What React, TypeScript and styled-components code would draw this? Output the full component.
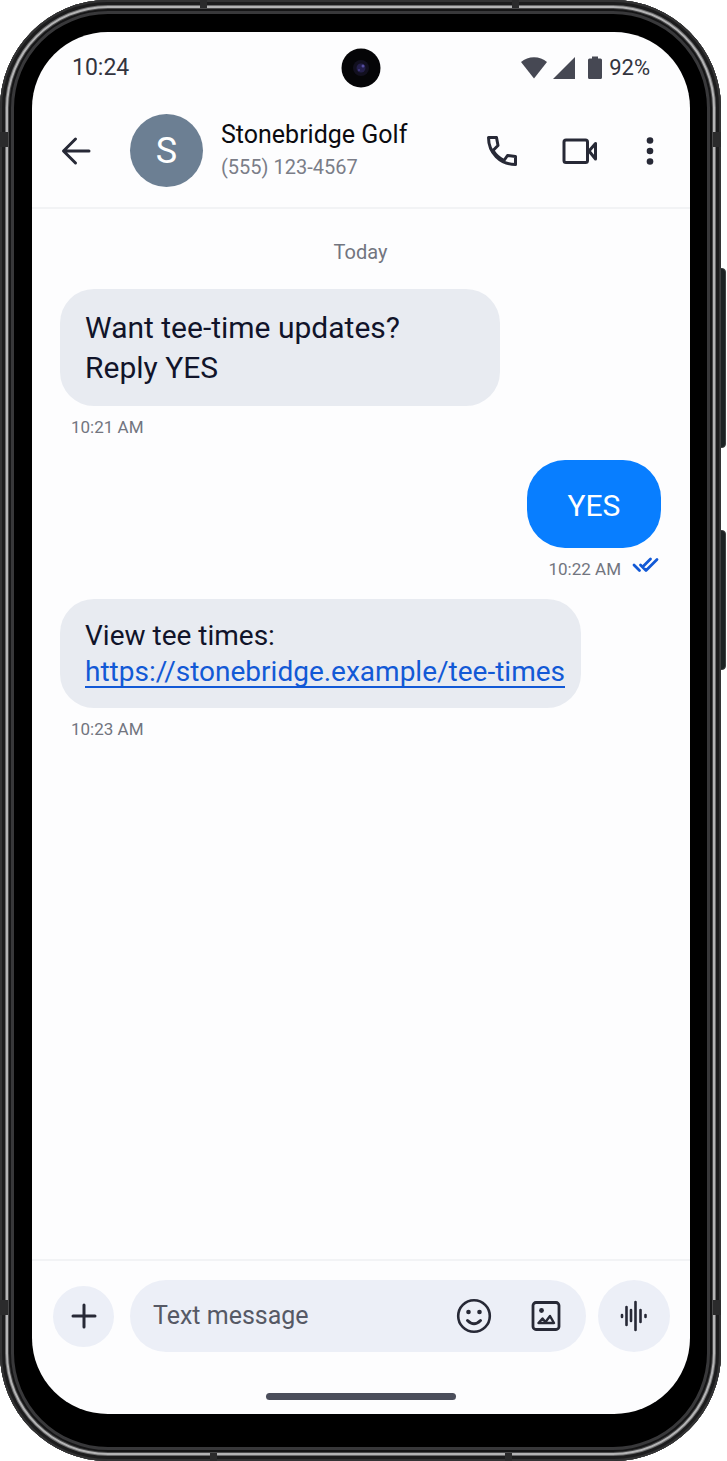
import React from "react";
import styled, { createGlobalStyle } from "styled-components";

const GlobalStyle = createGlobalStyle`
  *, *::before, *::after { box-sizing: border-box; }
  body {
    margin: 0;
    background: #ffffff;
    font-family: Roboto, "Liberation Sans", sans-serif;
    color: #23252f;
  }
  button { font: inherit; color: inherit; border: 0; padding: 0; background: none; cursor: pointer; }
  svg { display: block; flex: none; }
`;

const Stage = styled.div`
  display: flex;
  min-height: 100vh;
  padding-right: 6px;
`;

const Phone = styled.div`
  position: relative;
  flex: 1;
  min-width: 0;
  display: flex;
  padding: 32px 31px 47px 32px;
  border-radius: 108px;
  background: #000000;
  box-shadow:
    inset 0 0 0 2px #333334,
    inset 0 0 0 5px #1c1c1d,
    inset 0 0 0 6px #6b6b6c,
    inset 0 0 0 8px #b4b4b5,
    inset 0 0 0 9px #4a4a4b,
    inset 0 0 0 11px #151516,
    inset 0 0 0 14px #38383a;
`;

const SideKey = styled.span<{ $top: number; $height: number }>`
  position: absolute;
  right: -5px;
  top: ${(p) => p.$top}px;
  width: 6px;
  height: ${(p) => p.$height}px;
  border-radius: 0 4px 4px 0;
  border: 1px solid #3d3f40;
  background: #1c2223;
`;

const Band = styled.span<{ $edge: "left" | "right" | "top" | "bottom"; $at: number }>`
  position: absolute;
  background: #2b2b2c;
  ${(p) =>
    p.$edge === "left" || p.$edge === "right"
      ? `${p.$edge}: 0; top: ${p.$at}px; width: 8px; height: 15px;`
      : `${p.$edge}: 0; left: ${p.$at}px; width: 7px; height: 8px;`}
`;

const Screen = styled.main`
  flex: 1;
  min-width: 0;
  display: flex;
  flex-direction: column;
  border-radius: 76px;
  background: #fdfdfe;
  overflow: hidden;
`;

const StatusBar = styled.div`
  display: grid;
  grid-template-columns: 1fr auto 1fr;
  align-items: center;
  height: 71px;
  padding: 0 40px;
  font-size: 23px;
  line-height: 28px;
  color: #33343e;
`;

const StatusIcons = styled.div`
  display: flex;
  align-items: center;
  justify-content: flex-end;
  font-size: 22px;
`;

const StatusGlyph = styled.svg`
  margin-right: 6px;
`;

const Header = styled.header`
  display: flex;
  align-items: center;
  height: 106px;
  padding: 0 30px 9px 29px;
  border-bottom: 2px solid #f2f3f5;
`;

const BackButton = styled.button`
  margin-right: 39px;
`;

const Avatar = styled.div`
  flex: none;
  display: grid;
  place-items: center;
  width: 73px;
  height: 73px;
  margin-right: 18px;
  border-radius: 50%;
  background: #6c7f93;
  color: #ffffff;
  font-size: 36px;
`;

const Contact = styled.div`
  flex: 1;
  min-width: 0;
  line-height: 33px;
`;

const ContactName = styled.h1`
  margin: 0;
  font-size: 25px;
  font-weight: 400;
  color: #0b0b10;
  white-space: nowrap;
`;

const ContactNumber = styled.div`
  font-size: 20px;
  color: #7b7d88;
`;

const Actions = styled.div`
  display: flex;
  gap: 42px;
`;

const ActionButton = styled.button<{ $narrow?: boolean }>`
  display: grid;
  place-items: center;
  width: ${(p) => (p.$narrow ? 20 : 36)}px;
  height: 36px;
`;

const Thread = styled.section`
  flex: 1;
  display: flex;
  flex-direction: column;
  padding: 29px 29px 24px 28px;
`;

const DayLabel = styled.div`
  margin-bottom: 23px;
  text-align: center;
  font-size: 20px;
  line-height: 28px;
  color: #72757f;
`;

const Message = styled.article<{ $sent?: boolean }>`
  display: flex;
  flex-direction: column;
  align-items: ${(p) => (p.$sent ? "flex-end" : "flex-start")};
`;

const Bubble = styled.div<{ $sent?: boolean; $roomy?: boolean }>`
  min-width: ${(p) => (p.$roomy ? 440 : 134)}px;
  max-width: 100%;
  padding: ${(p) => (p.$sent ? "26px 40px 22px" : "19px 16px 18px 25px")};
  border-radius: ${(p) => (p.$sent ? 38 : 34)}px;
  background: ${(p) => (p.$sent ? "#087eff" : "#e8ebf1")};
  color: ${(p) => (p.$sent ? "#ffffff" : "#11142a")};
  font-size: ${(p) => (p.$roomy || p.$sent ? 30 : 28)}px;
  line-height: ${(p) => (p.$roomy || p.$sent ? 40 : 36)}px;
  text-align: ${(p) => (p.$sent ? "center" : "left")};
`;

const MessageLink = styled.a`
  color: #1259d6;
  text-decoration: underline;
  text-decoration-thickness: 2px;
  text-underline-offset: 5px;
  text-decoration-skip-ink: none;
`;

const Meta = styled.div<{ $sent?: boolean }>`
  display: flex;
  gap: 11px;
  height: ${(p) => (p.$sent ? 51 : 54)}px;
  padding: 9px ${(p) => (p.$sent ? 2 : 0)}px 0 ${(p) => (p.$sent ? 0 : 11)}px;
  font-size: 17px;
  line-height: 24px;
  color: #72757f;
`;

const Composer = styled.form`
  display: flex;
  align-items: center;
  gap: 12px;
  padding: 19px 20px 0 21px;
  border-top: 2px solid #f2f3f5;
`;

const RoundButton = styled.button<{ $size: number }>`
  flex: none;
  display: grid;
  place-items: center;
  width: ${(p) => p.$size}px;
  height: ${(p) => p.$size}px;
  border-radius: 50%;
  background: #eceff7;
`;

const Field = styled.div`
  flex: 1;
  min-width: 0;
  display: flex;
  align-items: center;
  gap: 36px;
  height: 72px;
  margin-left: 4px;
  padding: 0 22px 0 23px;
  border-radius: 36px;
  background: #eceff7;
`;

const TextInput = styled.input`
  flex: 1;
  min-width: 0;
  border: 0;
  padding: 0;
  outline: 0;
  background: none;
  font: 25px/36px Roboto, "Liberation Sans", sans-serif;
  color: #23252f;
  &::placeholder { color: #565965; opacity: 1; }
`;

const HomeBar = styled.div`
  width: 190px;
  height: 7px;
  margin: 41px auto 14px;
  border-radius: 4px;
  background: #4b4e5b;
`;

const Camera = () => (
  <svg width="40" height="40" viewBox="0 0 40 40" aria-hidden="true">
    <circle cx="20" cy="20" r="19.5" fill="#050507" />
    <circle cx="20" cy="20" r="8" fill="#12101f" />
    <circle cx="20" cy="20" r="4.5" fill="#241f4b" />
    <circle cx="22" cy="18" r="1.5" fill="#574fa0" />
    <circle cx="18" cy="22" r="1" fill="#453d86" />
  </svg>
);

const stroke = {
  fill: "none",
  stroke: "#272936",
  strokeWidth: 3,
  strokeLinecap: "round" as const,
  strokeLinejoin: "round" as const,
};

export default function App() {
  return (
    <>
      <GlobalStyle />
      <Stage>
        <Phone>
          <SideKey $top={268} $height={180} />
          <SideKey $top={530} $height={140} />
          <Band $edge="left" $at={132} />
          <Band $edge="left" $at={1300} />
          <Band $edge="right" $at={132} />
          <Band $edge="right" $at={1300} />
          <Band $edge="top" $at={200} />
          <Band $edge="top" $at={512} />
          <Band $edge="bottom" $at={210} />
          <Band $edge="bottom" $at={505} />
          <Screen>
            <StatusBar>
              <span>10:24</span>
              <Camera />
              <StatusIcons>
                <StatusGlyph width="26" height="24" viewBox="0 0 26 24" fill="#464853" aria-label="Wi-Fi">
                  <path d="M13 22.500 0 6C7-0.500 19-0.500 26 6Z" />
                </StatusGlyph>
                <StatusGlyph width="22" height="24" viewBox="0 0 22 24" fill="#464853" aria-label="Signal">
                  <path d="M22 1V23H0Z" />
                </StatusGlyph>
                <StatusGlyph width="22" height="24" viewBox="0 0 22 24" fill="#464853" aria-label="Battery">
                  <path d="M11 0.500h6v2h2.500Q21 2.500 21 4V21.500Q21 23 19.500 23h-11Q7 23 7 21.500V4Q7 2.500 8.500 2.500H11Z" />
                </StatusGlyph>
                92%
              </StatusIcons>
            </StatusBar>

            <Header>
              <BackButton aria-label="Back">
                <svg width="30" height="30" viewBox="0 0 30 30" {...stroke}>
                  <path d="M28 15H3M14.500 3 2.500 15l12 12" />
                </svg>
              </BackButton>
              <Avatar>S</Avatar>
              <Contact>
                <ContactName>Stonebridge Golf</ContactName>
                <ContactNumber>(555) 123-4567</ContactNumber>
              </Contact>
              <Actions>
                <ActionButton aria-label="Call">
                  <svg width="32" height="32" viewBox="0 0 32 32" {...stroke}>
                    <path d="M2.500 2.500H10.500L12 10.500 7 15.500Q11 22 18 25.500L21.500 20.500 29.500 21.500V29.500C14 29.500 2.500 17.500 2.500 2.500Z" />
                  </svg>
                </ActionButton>
                <ActionButton aria-label="Video call">
                  <svg width="36" height="28" viewBox="0 0 36 28" {...stroke}>
                    <rect x="2" y="3" width="23.500" height="22.500" rx="2" />
                    <path d="M27 14 33.500 6.500V22Z" />
                  </svg>
                </ActionButton>
                <ActionButton $narrow aria-label="More options">
                  <svg width="8" height="30" viewBox="0 0 8 30" fill="#272936">
                    <circle cx="4" cy="4.500" r="3.300" />
                    <circle cx="4" cy="15" r="3.300" />
                    <circle cx="4" cy="25.500" r="3.300" />
                  </svg>
                </ActionButton>
              </Actions>
            </Header>

            <Thread>
              <DayLabel>Today</DayLabel>
              <Message>
                <Bubble $roomy>
                  Want tee-time updates?
                  <br />
                  Reply YES
                </Bubble>
                <Meta>10:21 AM</Meta>
              </Message>
              <Message $sent>
                <Bubble $sent>YES</Bubble>
                <Meta $sent>
                  10:22 AM
                  <svg width="27" height="18" viewBox="0 0 27 18" {...stroke} stroke="#1259d6" strokeWidth={2.8} aria-label="Read">
                    <path d="M2 8 7.500 13.500M11 9.500 18.500 2M8.500 8 14 13.500 25 2.500" />
                  </svg>
                </Meta>
              </Message>
              <Message>
                <Bubble>
                  View tee times:
                  <br />
                  <MessageLink href="https://stonebridge.example/tee-times">
                    https://stonebridge.example/tee-times
                  </MessageLink>
                </Bubble>
                <Meta>10:23 AM</Meta>
              </Message>
            </Thread>

            <Composer onSubmit={(e) => e.preventDefault()}>
              <RoundButton type="button" $size={61} aria-label="Add attachment">
                <svg width="26" height="26" viewBox="0 0 26 26" {...stroke}>
                  <path d="M13 2V24M2 13H24" />
                </svg>
              </RoundButton>
              <Field>
                <TextInput type="text" aria-label="Text message" placeholder="Text message" />
                <ActionButton type="button" aria-label="Emoji">
                  <svg width="36" height="36" viewBox="0 0 36 36" {...stroke}>
                    <circle cx="18" cy="18" r="15.800" strokeWidth="2.600" />
                    <path d="M11.500 22.500Q18 29 24.500 22.500" />
                    <circle cx="12.500" cy="14" r="2.300" fill="#272936" stroke="none" />
                    <circle cx="23.500" cy="14" r="2.300" fill="#272936" stroke="none" />
                  </svg>
                </ActionButton>
                <ActionButton type="button" aria-label="Gallery">
                  <svg width="32" height="32" viewBox="0 0 32 32" {...stroke} strokeWidth={2.8}>
                    <rect x="3" y="2.500" width="26" height="27" rx="3" />
                    <circle cx="11.500" cy="10.500" r="2.400" fill="#272936" stroke="none" />
                    <path d="M8.500 23 12.500 18.500 15.500 22 20 16 24 23Z" strokeWidth="2.400" />
                  </svg>
                </ActionButton>
              </Field>
              <RoundButton type="button" $size={72} aria-label="Record voice message">
                <svg width="28" height="32" viewBox="0 0 28 32" {...stroke} strokeWidth={2.6}>
                  <path d="M2 15v2M6.500 7V25M11 10V21M15.500 2V30M20.500 10V22M25.500 15v2" />
                </svg>
              </RoundButton>
            </Composer>
            <HomeBar />
          </Screen>
        </Phone>
      </Stage>
    </>
  );
}
